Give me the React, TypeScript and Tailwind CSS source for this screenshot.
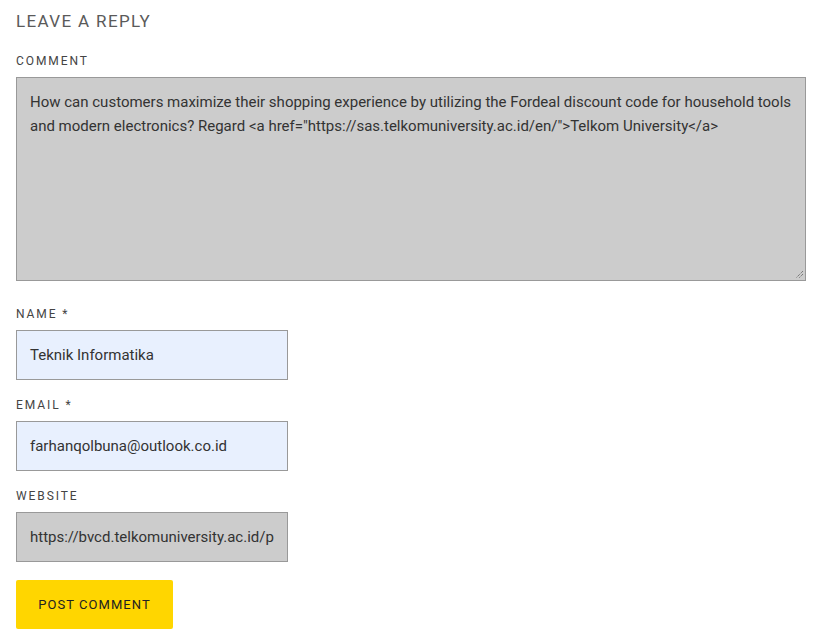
import React from 'react';

const labelCls =
    "block text-[12px] leading-[18px] tracking-[0.16em] uppercase text-[#444] mb-[7px]";

const fieldCls =
    "block w-[272px] h-[50px] border border-[#999] px-[13px] text-[15px] text-[#333] outline-none";

export default function App() {
    return (
        <div className="bg-white min-h-[643px] px-4 pt-[11px]" style={{ fontFamily: 'Roboto, "Liberation Sans", sans-serif' }}>
            <h3 className="text-[17px] leading-5 tracking-[0.08em] uppercase text-[#5a5a5a] font-normal mb-[21px]">
                Leave a Reply
            </h3>

            {/* Comment */}
            <label className={labelCls}>Comment</label>
            <div className="relative w-[790px] h-[204px] border border-[#999] bg-[#cccccc] px-[13px] py-[12px] text-[15px] leading-[24px] text-[#333]">
                How can customers maximize their shopping experience by utilizing the Fordeal discount code for household tools and modern electronics? Regard &lt;a href="https://sas.telkomuniversity.ac.id/en/"&gt;Telkom University&lt;/a&gt;
                <svg className="absolute right-[1px] bottom-[1px]" width="10" height="10" viewBox="0 0 10 10">
                    <path d="M9 2 L2 9 M9 5 L5 9" stroke="#555" strokeWidth="1" strokeDasharray="1 1" />
                </svg>
            </div>

            <div className="h-[24px]" />
            <label className={labelCls}>Name *</label>
            <div className={`${fieldCls} bg-[#e8f0fe] flex items-center`}>Teknik Informatika</div>

            <div className="h-[16px]" />
            <label className={labelCls}>Email *</label>
            <div className={`${fieldCls} bg-[#e8f0fe] flex items-center`}>farhanqolbuna@outlook.co.id</div>

            <div className="h-[16px]" />
            <label className={labelCls}>Website</label>
            <div className={`${fieldCls} bg-[#cccccc] flex items-center overflow-hidden whitespace-nowrap`}>https://bvcd.telkomuniversity.ac.id/p</div>

            <button className="mt-[18px] w-[157px] h-[49px] rounded-[2px] bg-[#ffd600] text-[13px] tracking-[0.08em] uppercase text-[#222]">
                Post Comment
            </button>
        </div>
    );
}
